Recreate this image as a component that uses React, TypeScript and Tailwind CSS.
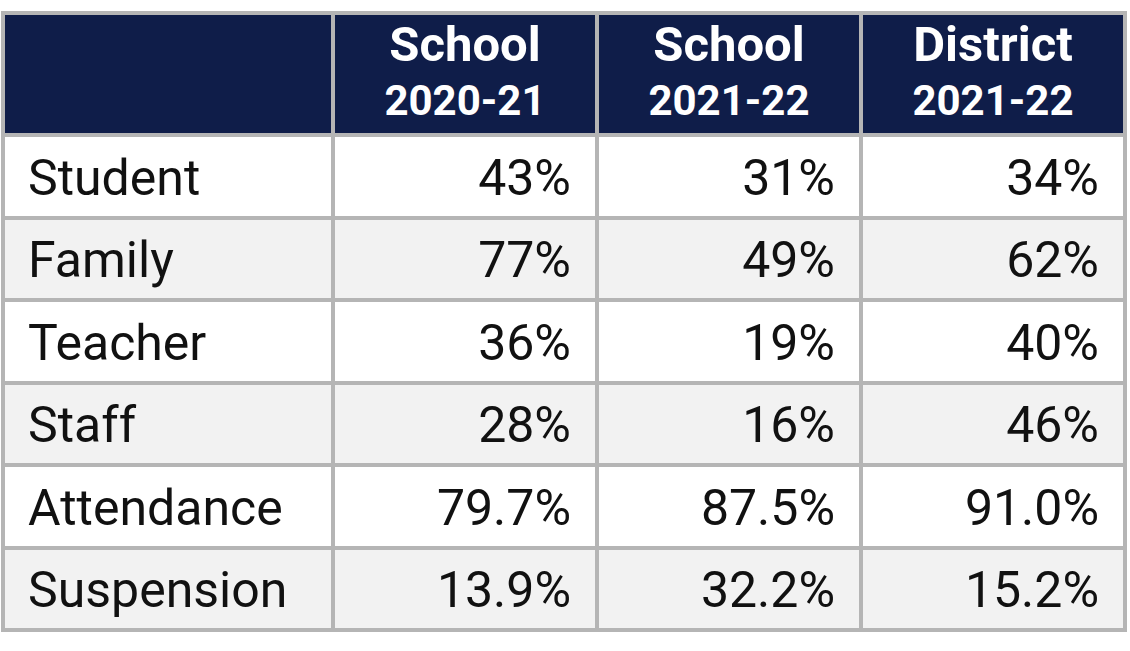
const HEADERS = [
  { title: "School", year: "2020-21" },
  { title: "School", year: "2021-22" },
  { title: "District", year: "2021-22" },
];

const ROWS: [string, string, string, string][] = [
  ["Student", "43%", "31%", "34%"],
  ["Family", "77%", "49%", "62%"],
  ["Teacher", "36%", "19%", "40%"],
  ["Staff", "28%", "16%", "46%"],
  ["Attendance", "79.7%", "87.5%", "91.0%"],
  ["Suspension", "13.9%", "32.2%", "15.2%"],
];

export default function App() {
  return (
    <div className="w-[1130px] h-[651px] bg-white pt-[11px] pl-[1px] font-['Roboto',sans-serif] text-[#111]">
      <div className="inline-grid grid-cols-[326px_260px_260px_260px] grid-rows-[118px_repeat(6,78.5px)] gap-[4px] border-4 border-[#b5b5b5] bg-[#b5b5b5]">
        <div className="bg-[#0f1d49]" />
        {HEADERS.map((h, i) => (
          <div key={i} className="bg-[#0f1d49] flex flex-col items-center justify-center text-white font-bold pb-[2px]">
            <span className="text-[49px] leading-[55px]">{h.title}</span>
            <span className="text-[42px] leading-[58px]">{h.year}</span>
          </div>
        ))}
        {ROWS.map((row, r) => {
          const bg = r % 2 === 0 ? "bg-white" : "bg-[#f2f2f2]";
          return row.map((cell, c) => (
            <div
              key={`${r}-${c}`}
              className={`${bg} flex items-center pt-[3px] text-[50px] leading-none ${
                c === 0 ? "justify-start pl-[23px]" : "justify-end pr-[24px]"
              }`}
            >
              {cell}
            </div>
          ));
        })}
      </div>
    </div>
  );
}
